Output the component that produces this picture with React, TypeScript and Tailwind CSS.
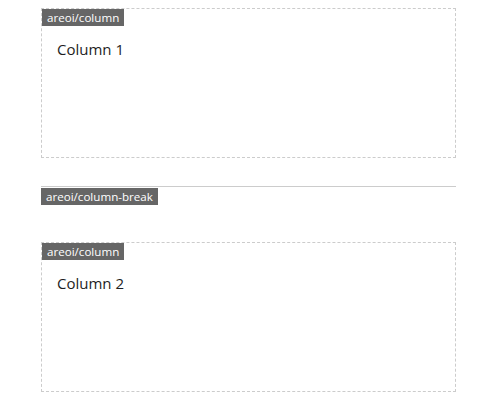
const font = { fontFamily: '"Open Sans", "Noto Sans", sans-serif' };

const BlockLabel = ({ name }: { name: string }) => (
  <span className="absolute left-0 top-0 bg-[#666666] px-[5px] text-[11.6px] leading-[17px] text-white">
    {name}
  </span>
);

const Column = ({ title }: { title: string }) => (
  <div className="relative h-[150px] border border-dashed border-[#cccccc] px-[15px] pt-[30px]">
    <BlockLabel name="areoi/column" />
    <p className="text-[15px] leading-[20px] text-[#1e1e1e]">{title}</p>
  </div>
);

const ColumnBreak = () => (
  <div className="relative my-[28px] h-[28px] border-t border-[#cccccc]">
    <span className="absolute left-0 top-[1px] bg-[#666666] px-[5px] text-[11.6px] leading-[17px] text-white">
      areoi/column-break
    </span>
  </div>
);

export default function App() {
  return (
    <div className="h-[400px] w-[500px] bg-white pt-[8px]" style={font}>
      <div className="ml-[41px] w-[415px]">
        <Column title="Column 1" />
        <ColumnBreak />
        <Column title="Column 2" />
      </div>
    </div>
  );
}
